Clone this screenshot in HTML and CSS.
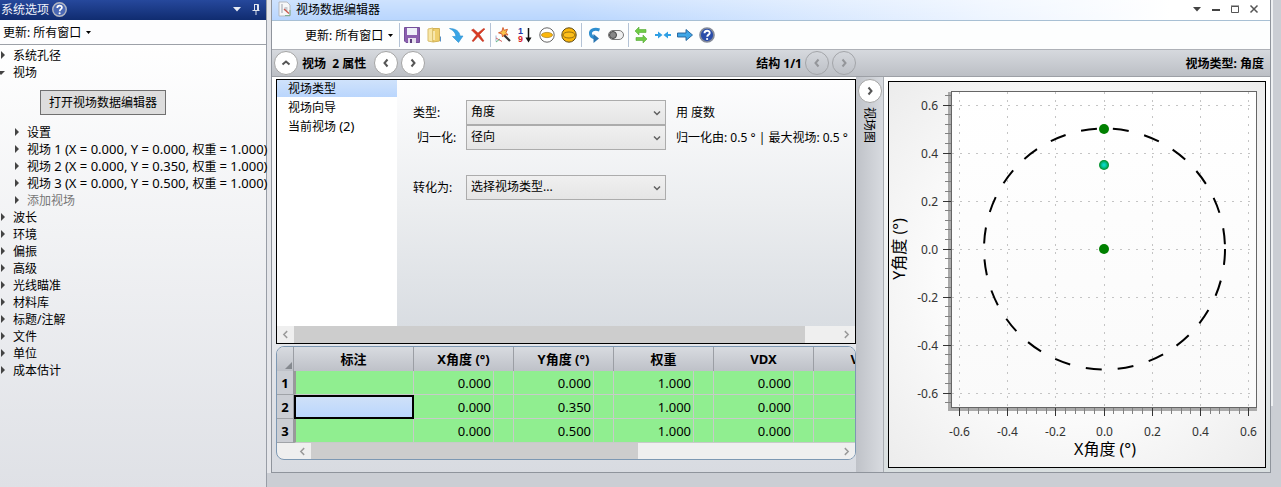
FILE: index.html
```html
<!DOCTYPE html>
<html lang="zh-CN">
<head>
<meta charset="utf-8">
<title>视场数据编辑器</title>
<link rel="stylesheet" href="styles.css">
</head>
<body>
<div class="app">
  <aside class="sidebar">
    <header class="side-title">
      <h2>系统选项</h2>
      <svg class="help" viewBox="0 0 16 16" width="15" height="15"><circle cx="8" cy="8" r="7.2" fill="#4a68b4" stroke="#b4b8c2" stroke-width="1.5"/><path d="M5.6 6.3c0-3.4 5-3.2 5-.4 0 1.8-2.4 1.7-2.4 3.9" fill="none" stroke="#fff" stroke-width="1.8"/><circle cx="8.1" cy="12" r="1.1" fill="#fff"/></svg>
      <span class="spring"></span>
      <svg width="10" height="6" viewBox="0 0 10 6"><path d="M1 1h8L5 5.4z" fill="#e8ecf4"/></svg>
      <svg width="8" height="11" viewBox="0 0 8 11"><path d="M2 .5h4.5V6M2.5.5V6M5.5 1v5M.5 6.5h7M4 7v4" fill="none" stroke="#e0e4ee"/></svg>
    </header>
    <div class="side-update">更新: 所有窗口 <svg width="5" height="3" viewBox="0 0 5 3"><path d="M0 0h5L2.500 3z"/></svg></div>
    <ul class="tree">
      <li class="closed">系统孔径</li>
      <li class="open">视场
        <button class="open-editor" type="button">打开视场数据编辑器</button>
        <ul>
          <li class="closed">设置</li>
          <li class="closed">视场 <span class="values">1 (X = 0.000, Y = 0.000, </span>权重 <span class="values">= 1.000)</span></li>
          <li class="closed">视场 <span class="values">2 (X = 0.000, Y = 0.350, </span>权重 <span class="values">= 1.000)</span></li>
          <li class="closed">视场 <span class="values">3 (X = 0.000, Y = 0.500, </span>权重 <span class="values">= 1.000)</span></li>
          <li class="closed muted">添加视场</li>
        </ul>
      </li>
      <li class="closed">波长</li>
      <li class="closed">环境</li>
      <li class="closed">偏振</li>
      <li class="closed">高级</li>
      <li class="closed">光线瞄准</li>
      <li class="closed">材料库</li>
      <li class="closed">标题/注解</li>
      <li class="closed">文件</li>
      <li class="closed">单位</li>
      <li class="closed">成本估计</li>
    </ul>
  </aside>

  <main class="window">
    <header class="win-title">
      <svg width="14" height="16" viewBox="0 0 14 16"><path d="M1 1h8l3 3v11H1z" fill="#f6f7f8" stroke="#b5b9bf"/><path d="M3 3h2v9H3zM6.500 6h3v4h-3z" fill="#c9ccd2"/><path d="M6 8l5 4.500" stroke="#c9564c" stroke-width="1.300"/><path d="M7 14.500h5V9" stroke="#7fae92" fill="none"/></svg>
      <h1>视场数据编辑器</h1>
      <span class="spring"></span>
      <div class="win-buttons">
        <button type="button" aria-label="菜单"><svg width="10" height="10" viewBox="0 0 10 10"><path d="M1 3h8L5 7.400z" fill="#444"/></svg></button>
        <button type="button" aria-label="最小化"><svg width="10" height="10" viewBox="0 0 10 10"><path d="M1 6h8" stroke="#444" stroke-width="2"/></svg></button>
        <button type="button" aria-label="最大化"><svg width="10" height="10" viewBox="0 0 10 10"><path d="M1.500 2.500h7v6h-7zM1 2h8" fill="none" stroke="#555"/></svg></button>
        <button type="button" aria-label="关闭"><svg width="10" height="10" viewBox="0 0 10 10"><path d="M1.500 1.500l7 7M8.500 1.500l-7 7" stroke="#555" stroke-width="1.500"/></svg></button>
      </div>
    </header>

    <div class="toolbar">
      <span class="update">更新: 所有窗口 <svg width="5" height="3" viewBox="0 0 5 3"><path d="M0 0h5L2.500 3z"/></svg></span>
      <i class="sep"></i>
      <button type="button" aria-label="保存"><svg viewBox="0 0 16 16"><path d="M.5.5h15v15H2L.5 14z" fill="#8b5fae" stroke="#75509a"/><path d="M3 1h10v7H3z" fill="#eef0f8"/><path d="M4 11h8v5H4z" fill="#e6e2ee"/><path d="M6 12h2v4H6z" fill="#5c3d7c"/></svg></button>
      <button type="button" aria-label="打开"><svg viewBox="0 0 16 16"><path d="M2 2l5-1v14l-5-1z" fill="#f8e7a6" stroke="#d9be6c"/><path d="M7 1.500h6.500V14L7 15z" fill="#efcf6c" stroke="#d2b257"/><path d="M8 4v9" stroke="#fbf0c4" stroke-width="1.500"/><path d="M14.500 9.500v5" stroke="#5790c4"/></svg></button>
      <button type="button" aria-label="插入"><svg viewBox="0 0 16 16"><path d="M1.500 1.500C8 1.500 11.500 4.500 12 9h3L10.500 15.500 4.500 9.500h3.300C7.800 6 5.500 3.500 1.500 1.500z" fill="#39a5e6" stroke="#2d8fce" stroke-width=".6"/></svg></button>
      <button type="button" aria-label="删除"><svg viewBox="0 0 16 16"><path d="M1.500 3l2-1L8 6l5.500-4.500 1.500.5-5.500 5.500L14 14l-1.500.5L8 9.500 3.500 14.500 2 14l4.500-6z" fill="#d93a22" stroke="#b93420" stroke-width=".5"/></svg></button>
      <i class="sep"></i>
      <button type="button" aria-label="向导"><svg viewBox="0 0 16 16"><path d="M8.500 7.500l6.500 6.500" stroke="#333" stroke-width="2.200"/><path d="M8 .5l1 2.800 3.500-1L11 5.500l2 2.500-3.300-.5L7.500 10 7 7 3.500 5.800 6.800 4.500z" fill="#f8c44a" stroke="#d2562c" stroke-width=".9"/><path d="M1 8.500v6" stroke="#9fb4d0"/><path d="M1 11l6 3.500" stroke="#d86262"/><path d="M1 15l4-3" stroke="#5fb884"/></svg></button>
      <button type="button" aria-label="排序"><svg viewBox="0 0 16 16"><text class="ico-digit" x="1" y="7" fill="#2336a8">1</text><text class="ico-digit" x="1" y="15" fill="#d81e26">9</text><path d="M11.500 1v10" stroke="#111" stroke-width="1.500"/><path d="M8.500 10.500h6l-3 5z" fill="#111"/></svg></button>
      <button type="button" aria-label="空心光瞳"><svg viewBox="0 0 16 16"><circle cx="8" cy="8" r="7.200" fill="#fff" stroke="#666"/><ellipse cx="8" cy="8" rx="5.500" ry="2.600" fill="#fbb70c" stroke="#a87c14" stroke-width=".7"/></svg></button>
      <button type="button" aria-label="实心光瞳"><svg viewBox="0 0 16 16"><circle cx="8" cy="8" r="7.200" fill="#fbb70c" stroke="#5d4a18"/><ellipse cx="8" cy="8" rx="6" ry="3" fill="#fdbf1b" stroke="#7a5a10" stroke-width=".8"/></svg></button>
      <i class="sep"></i>
      <button type="button" aria-label="撤销"><svg viewBox="0 0 16 16"><path d="M13.500 3C8 1 4 3.500 4.500 7c.3 2 2 3.300 4 3.800" fill="none" stroke="#2f8fd0" stroke-width="3"/><path d="M7.500 7l5.500 4.500L7.500 16z" fill="#2a76b2"/></svg></button>
      <button type="button" aria-label="开关"><svg viewBox="0 0 16 16"><rect x=".5" y="3.500" width="15" height="9" rx="4.500" fill="#efefef" stroke="#777"/><circle cx="5" cy="8" r="3.500" fill="#888" stroke="#444"/></svg></button>
      <i class="sep"></i>
      <button type="button" aria-label="交换"><svg viewBox="0 0 16 16"><path d="M2 4l4-4v2.500h7v3H6V8z" fill="#6ecb45" stroke="#55a836" stroke-width=".6"/><path d="M14 12l-4 4v-2.500H3v-3h7V8z" fill="#6ecb45" stroke="#55a836" stroke-width=".6"/></svg></button>
      <button type="button" aria-label="合拢"><svg viewBox="0 0 16 16"><path d="M0 7h3V4.500L7.500 8 3 11.500V9H0zM16 7h-3V4.500L8.500 8l4.500 3.500V9h3z" fill="#2f9fe4"/></svg></button>
      <button type="button" aria-label="前进"><svg viewBox="0 0 16 16"><path d="M.5 6H9V2.500L15.500 8 9 13.500V10H.5z" fill="#3fa6e6" stroke="#205f98" stroke-width=".9"/></svg></button>
      <button type="button" aria-label="帮助"><svg viewBox="0 0 16 16"><circle cx="8" cy="8" r="7" fill="#2a4daa" stroke="#858b99" stroke-width="1.700"/><path d="M5.500 6.300c0-3.400 5.200-3.200 5.200-.4 0 1.800-2.500 1.700-2.500 3.900" fill="none" stroke="#fff" stroke-width="1.900"/><circle cx="8.100" cy="12" r="1.100" fill="#fff"/></svg></button>
    </div>

    <div class="navbar">
      <div class="nav-left">
        <button class="round" type="button" aria-label="收起"><svg viewBox="0 0 10 10"><path d="M1.500 6.500L5 3.500l3.500 3"/></svg></button>
        <strong class="nav-name">视场&nbsp; 2 属性</strong>
        <button class="round" type="button" aria-label="上一个"><svg viewBox="0 0 10 10"><path d="M6.500 1.500L3.500 5l3 3.500"/></svg></button>
        <button class="round" type="button" aria-label="下一个"><svg viewBox="0 0 10 10"><path d="M3.500 1.500l3 3.500-3 3.500"/></svg></button>
        <span class="spring"></span>
        <strong>结构 1/1</strong>
        <button class="round" type="button" disabled aria-label="上一结构"><svg viewBox="0 0 10 10"><path d="M6.500 1.500L3.500 5l3 3.500"/></svg></button>
        <button class="round" type="button" disabled aria-label="下一结构"><svg viewBox="0 0 10 10"><path d="M3.500 1.500l3 3.500-3 3.500"/></svg></button>
      </div>
      <strong class="nav-right">视场类型: 角度</strong>
    </div>

    <div class="content">
      <div class="editor">
        <section class="props">
          <div class="props-body">
            <ul class="tabs">
              <li class="active">视场类型</li>
              <li>视场向导</li>
              <li>当前视场 <span class="values">(2)</span></li>
            </ul>
            <form class="form">
              <label for="type">类型:</label>
              <div class="select"><select id="type"><option>角度</option></select><svg viewBox="0 0 8 8"><path d="M1 2.500l3 3 3-3"/></svg></div>
              <span>用 度数</span>
              <label class="indent" for="norm">归一化:</label>
              <div class="select"><select id="norm"><option>径向</option></select><svg viewBox="0 0 8 8"><path d="M1 2.500l3 3 3-3"/></svg></div>
              <span>归一化由: 0.5 ° | 最大视场: 0.5 °</span>
              <label class="convert" for="conv">转化为:</label>
              <div class="select convert"><select id="conv"><option>选择视场类型...</option></select><svg viewBox="0 0 8 8"><path d="M1 2.500l3 3 3-3"/></svg></div>
            </form>
          </div>
          <div class="scroll">
            <svg viewBox="0 0 8 8"><path d="M5.500 1l-3 3 3 3"/></svg>
            <div class="track"><div class="thumb wide"></div></div>
            <svg viewBox="0 0 8 8"><path d="M2.500 1l3 3-3 3"/></svg>
          </div>
        </section>

        <section class="grid-box">
          <div class="grid-clip">
          <table>
            <colgroup><col class="c-row"><col class="c-note"><col class="c-val"><col class="c-flag"><col class="c-val"><col class="c-flag"><col class="c-val"><col class="c-flag"><col class="c-val"><col class="c-flag"><col class="c-val"><col class="c-flag"></colgroup>
            <thead><tr>
              <th class="corner"><svg width="7" height="7" viewBox="0 0 7 7"><path d="M7 0v7H0z" fill="#85898f"/></svg></th>
              <th>标注</th><th colspan="2">X角度 (°)</th><th colspan="2">Y角度 (°)</th><th colspan="2">权重</th><th colspan="2">VDX</th><th colspan="2">VDY</th>
            </tr></thead>
            <tbody>
              <tr><th>1</th><td></td><td>0.000</td><td></td><td>0.000</td><td></td><td>1.000</td><td></td><td>0.000</td><td></td><td class="last" colspan="2"></td></tr>
              <tr><th>2</th><td class="selected"></td><td>0.000</td><td></td><td>0.350</td><td></td><td>1.000</td><td></td><td>0.000</td><td></td><td class="last" colspan="2"></td></tr>
              <tr><th>3</th><td></td><td>0.000</td><td></td><td>0.500</td><td></td><td>1.000</td><td></td><td>0.000</td><td></td><td class="last" colspan="2"></td></tr>
            </tbody>
          </table>
          </div>
          <div class="scroll low">
            <svg viewBox="0 0 8 8"><path d="M5.500 1l-3 3 3 3"/></svg>
            <div class="track"><div class="thumb mid"></div></div>
            <svg viewBox="0 0 8 8"><path d="M2.500 1l3 3-3 3"/></svg>
          </div>
        </section>
      </div>

      <div class="splitter">
        <button class="round" type="button" aria-label="展开视场图"><svg viewBox="0 0 10 10"><path d="M3.500 1.500l3 3.500-3 3.500"/></svg></button>
        <span>视场图</span>
      </div>

      <section class="chart-pane">
        <svg class="chart" id="chart" viewBox="0 0 376 385" role="img" aria-label="视场图">
          <defs>
            <radialGradient id="current"><stop offset="0" stop-color="#08e0d8"/><stop offset=".45" stop-color="#06c49c"/><stop offset="1" stop-color="#008a1c"/></radialGradient>
            <linearGradient id="plot" x1="0" y1="0" x2="0" y2="1"><stop offset="0" stop-color="#fff"/><stop offset="1" stop-color="#fafafa"/></linearGradient>
          </defs>
          <path class="band" d="M59 10h3v316h306v3H59z"/>
          <rect class="plot" x="62.500" y="9.500" width="305" height="316"/>
          <g id="axes"></g>
          <circle class="limit" cx="215.500" cy="167" r="120.500"/>
          <circle cx="215" cy="47" r="5" fill="#008000"/>
          <circle cx="215" cy="83" r="5" fill="url(#current)"/>
          <circle cx="215" cy="167" r="5" fill="#008000"/>
          <text class="axis-title" x="216" y="373">X角度 (°)</text>
          <text class="axis-title" transform="translate(16 167) rotate(-90)">Y角度 (°)</text>
        </svg>
      </section>
    </div>
  </main>
  <div class="dock"></div>
</div>
<script src="chart.js"></script>
</body>
</html>
```
FILE: styles.css
```css
* { box-sizing: border-box; }
body {
  margin: 0;
  font: 12px/17px "Noto Sans", "Noto Sans CJK SC", sans-serif;
  color: #000;
  background: #cbced4;
}
button, select { font: inherit; color: inherit; }
button { padding: 0; }
h1, h2 { margin: 0; font: inherit; }
ul { margin: 0; padding: 0; list-style: none; }
svg { display: block; flex: none; }
.spring { flex: 1; }
.values { font-size: 13px; line-height: 16px; }

.app { display: flex; min-height: 100vh; }

/* system options panel */
.sidebar {
  flex: none;
  width: 267px;
  border-right: 1px solid #989da6;
  background: linear-gradient(#fff 40px, #dfe1e6);
}
.side-title {
  display: flex;
  align-items: center;
  gap: 10px;
  height: 20px;
  padding: 0 6px 2px 1px;
  color: #eef1fa;
  background: linear-gradient(#26489c, #102c70);
}
.side-title .help { margin-left: -7px; }
.side-update, .update { display: flex; align-items: center; gap: 5px; }
.side-update {
  height: 25px;
  padding-left: 3px;
  border-bottom: 1px solid #9da1a8;
  background: #fdfdfe;
}
.tree { padding-top: 2px; }
.tree li { position: relative; padding-left: 13px; white-space: nowrap; }
.tree ul li { height: 17px; padding-left: 14px; }
.tree li::before {
  content: "";
  position: absolute;
  left: 1px;
  top: 4px;
  border: 4px solid transparent;
  border-left-color: #444;
  border-right: 0;
}
.tree li.open::before {
  left: -3px;
  top: 7px;
  border: 4px solid transparent;
  border-top-color: #444;
  border-bottom: 0;
}
.tree ul li::before { left: 2px; }
.muted { color: #777; }
.open-editor {
  display: block;
  width: 126px;
  height: 25px;
  margin: 9px 0 9px 27px;
  border: 1px solid #707070;
  background: #ddd;
}

/* editor window */
.window {
  flex: 1;
  min-width: 0;
  align-self: flex-start;
  margin-left: 4px;
  border: 1px solid #8f949c;
  border-top: 0;
  background: #e4e6eb;
  box-shadow: -4px 0 #e5e6ea;
}
.win-title {
  display: flex;
  align-items: center;
  gap: 4px;
  height: 21px;
  padding: 0 11px 2px 6px;
  border-bottom: 1px solid #a8c0d4;
  background:
    linear-gradient(rgba(255, 255, 255, .3), rgba(255, 255, 255, 0)),
    linear-gradient(90deg, #b9d6fe 0, #b9d6fe 30%, #eef5ff 72%, #fff 90%);
}
.win-buttons { display: flex; gap: 9px; }
.win-buttons button { border: 0; background: none; }
.toolbar {
  display: flex;
  align-items: center;
  height: 28px;
  padding-left: 33px;
  background: #fdfefe;
}
.toolbar button { display: grid; place-items: center; width: 22px; height: 22px; border: 0; background: none; }
.toolbar button svg { width: 16px; height: 16px; overflow: visible; }
.update { margin-right: 5px; }
.sep { width: 1px; height: 24px; margin: 0 1px; background: #b4c3d6; }
.ico-digit { font: bold 9px "Liberation Sans", sans-serif; }

.navbar {
  display: grid;
  grid-template-columns: minmax(0, 584fr) minmax(0, 414fr);
  align-items: center;
  height: 28px;
  border-top: 1px solid #aeb1b7;
  border-bottom: 1px solid #9da0a6;
  background: linear-gradient(#d6d9de, #bcbfc5);
}
.nav-left { display: flex; align-items: center; gap: 3px; padding-left: 2px; }
.nav-name { padding: 0 5px 0 1px; }
.nav-right { padding-right: 6px; text-align: right; }
.round {
  display: grid;
  place-items: center;
  flex: none;
  width: 24px;
  height: 24px;
  border: 1px solid #a4a4a4;
  border-radius: 50%;
  background: #fff;
}
.round svg { width: 10px; height: 10px; fill: none; stroke: #555; stroke-width: 2; }
.round:disabled { border-color: #a3a5a9; background: none; }
.round:disabled svg { stroke: #94969a; }

.content { display: grid; grid-template-columns: minmax(0, 584fr) 28px minmax(0, 386fr); }
.editor { display: flex; flex-direction: column; gap: 2px; padding: 2px 0 11px 4px; background: linear-gradient(#fff, #d8dbe1); }
.props { display: flex; flex-direction: column; border: 1px solid #000; }
.props-body { display: flex; min-height: 246px; }
.tabs { flex: none; width: 120px; background: #fff; }
.tabs li { height: 19px; padding-left: 11px; line-height: 18px; }
.tabs .active { height: 17px; margin-bottom: 2px; line-height: 17px; background: linear-gradient(#cfe2fb, #bad6fd); }
.form {
  flex: 1;
  display: grid;
  grid-template-columns: 53px 200px 1fr;
  grid-auto-rows: 25px;
  align-content: start;
  align-items: center;
  padding: 20px 0 0 16px;
  white-space: nowrap;
  background: linear-gradient(#fdfdfe, #eceef0 50%, #d9dde2);
}
.form > span { padding-left: 10px; }
.indent { padding-left: 4px; }
.convert { grid-row: 4; }
.select { display: grid; align-items: center; }
.select > * { grid-area: 1 / 1; }
.select select {
  appearance: none;
  width: 100%;
  height: 25px;
  padding: 0 4px 2px;
  border: 1px solid #acacac;
  border-radius: 0;
  background: linear-gradient(#f0f0f0, #e5e5e5);
}
.select svg { width: 8px; height: 8px; margin-right: 5px; justify-self: end; fill: none; stroke: #606060; stroke-width: 1.5; pointer-events: none; }

.scroll { display: flex; align-items: center; height: 17px; gap: 4px; padding: 0 4px; background: #efefef; }
.scroll svg { width: 9px; height: 9px; fill: none; stroke: #9a9a9a; stroke-width: 1.3; }
.track { flex: 1; align-self: stretch; }
.thumb { height: 100%; background: #cdcdcd; }
.thumb.wide { width: 94%; }
.thumb.mid { width: 62%; }

.grid-box { overflow: hidden; border: 1px solid #7d98b3; border-radius: 8px; background: #efefef; }
.grid-clip { overflow: hidden; }
.scroll.low { height: 16px; margin-left: 17px; }
table { table-layout: fixed; width: 637px; border-collapse: separate; border-spacing: 0; font-size: 13px; line-height: 18px; }
.c-row { width: 17px; }
.c-note { width: 120px; }
.c-val { width: 80px; }
.c-flag { width: 20px; }
th, td { height: 24px; padding: 0; border-right: 1px solid #c7cbc9; border-bottom: 1px solid #c7cbc9; }
thead th { border-right-color: #9b9ea4; border-bottom: 0; background: linear-gradient(#d8dbe0, #bec1c8); }
tbody th { border-right-color: #96999e; border-bottom-color: #a0a3a8; background: #cbced4; }
.corner { vertical-align: bottom; }
.corner svg { margin: 0 1px 2px auto; }
td { padding-right: 2px; text-align: right; background: #90ee90; }
td:nth-child(2) { border-left: 2px solid #999; }
td.selected { border: 2px solid #000; background: linear-gradient(#cfe0f8, #bad6fd); }

.splitter {
  display: flex;
  flex-direction: column;
  align-items: center;
  gap: 4px;
  padding-top: 2px;
  border-right: 1px solid #a9adb3;
  background: linear-gradient(90deg, #bfc2c8, #d8dbe0);
}
.splitter span { writing-mode: vertical-rl; text-orientation: sideways; }
.chart-pane { display: flex; align-items: flex-start; padding: 4px; background: linear-gradient(#fff, #d9dfe0); }
.chart { flex: 1; min-width: 0; height: auto; border: 1px solid #000; background: radial-gradient(#fff 40%, #ececec); }
.band { fill: #aaa; }
.plot { fill: url(#plot); stroke: #666; }
.grid-line { stroke: #c4c4c4; stroke-dasharray: 2 6; }
.major { stroke: #333; }
.minor { stroke: #808080; }
.limit { fill: none; stroke: #000; stroke-width: 2; stroke-dasharray: 16 16; }
.tick { fill: #333; font-size: 12px; }
.tick.x { text-anchor: middle; }
.tick.y { text-anchor: end; }
.axis-title { font-size: 16px; text-anchor: middle; }

.dock { flex: none; width: 10px; height: 406px; border-left: 2px solid #eef0f2; }
```
FILE: chart.js
```js
(function () {
  var ns = "http://www.w3.org/2000/svg";
  var axes = document.getElementById("axes");

  function line(cls, x1, y1, x2, y2) {
    var el = document.createElementNS(ns, "line");
    el.setAttribute("class", cls);
    el.setAttribute("x1", x1);
    el.setAttribute("y1", y1);
    el.setAttribute("x2", x2);
    el.setAttribute("y2", y2);
    axes.appendChild(el);
  }
  function label(cls, x, y, value) {
    var el = document.createElementNS(ns, "text");
    el.setAttribute("class", "tick " + cls);
    el.setAttribute("x", x);
    el.setAttribute("y", y);
    el.textContent = value;
    axes.appendChild(el);
  }

  // five minor steps for each 0.2 degree
  for (var i = -16; i <= 16; i++) {
    var x = Math.floor(215 + i * 9.66) + 0.5;
    var y = Math.floor(167 - i * 9.6) + 0.5;
    var major = i % 5 === 0;
    if (x > 62 && x < 368) {
      if (major) {
        line("grid-line", x, 10, x, 325);
        line("major", x, 326, x, 334);
        label("x", x, 354, (i / 25).toFixed(1));
      } else {
        line("minor", x, 326, x, 332);
      }
    }
    if (y > 10 && y < 325) {
      if (major) {
        line("grid-line", 63, y, 367, y);
        line("major", 54, y, 62, y);
        label("y", 49, y + 4, (i / 25).toFixed(1));
      } else {
        line("minor", 56, y, 62, y);
      }
    }
  }
})();
```
